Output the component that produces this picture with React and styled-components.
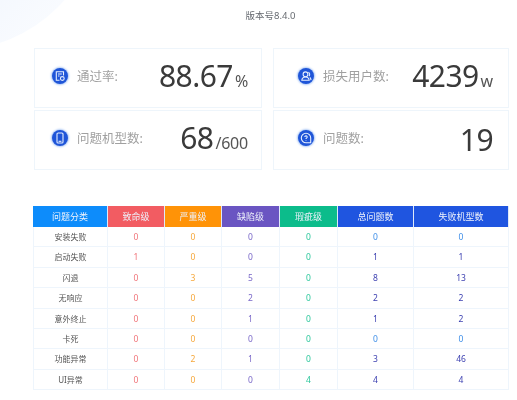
import React from "react";
import styled, { createGlobalStyle } from "styled-components";

const Global = createGlobalStyle`
  html, body { margin: 0; padding: 0; background: #fff; }
  body { font-family: "Noto Sans", "Noto Sans CJK SC", sans-serif; }
`;

const Page = styled.div`
  position: relative;
  width: 517px;
  height: 400px;
  overflow: hidden;
  background: #fff;
  box-sizing: border-box;
  padding: 9px 8px 0 33px;
  filter: blur(0.35px);
`;

const Corner = styled.div`
  position: absolute;
  left: -190px;
  top: -240px;
  width: 290px;
  height: 290px;
  border-radius: 50%;
  background: linear-gradient(135deg, #f0f5fd 60%, #fafcff 90%);
`;

const Version = styled.div`
  position: relative;
  text-align: center;
  width: 475px;
  font-size: 9.5px;
  line-height: 14px;
  color: #666a70;
`;

const Cards = styled.div`
  position: relative;
  display: grid;
  grid-template-columns: 228px 236px;
  grid-auto-rows: 60px;
  column-gap: 11px;
  row-gap: 2px;
  margin: 25px 0 0 1px;
`;

const Card = styled.div`
  display: flex;
  align-items: center;
  box-sizing: border-box;
  padding: 0 ${(p) => p.$pr}px 0 ${(p) => p.$pl}px;
  border: 1px solid #eef5fb;
  background: #fff;
`;

const Lead = styled.div`
  display: flex;
  flex: 1;
  align-items: center;
  margin-bottom: 5px;
`;

const IconDot = styled.span`
  display: flex;
  flex: none;
  align-items: center;
  justify-content: center;
  width: 16px;
  height: 16px;
  border-radius: 50%;
  background: #1f55d8;
  box-shadow: 0 0 2px 1px #a9c6f5;
  margin-right: 9px;
`;

const Label = styled.span`
  font-size: 12.5px;
  color: #a0a0a0;
  white-space: nowrap;
`;

const Value = styled.span`
  font-size: 30px;
  line-height: 40px;
  color: #3a3a3a;
  letter-spacing: -0.55px;
  white-space: nowrap;
`;

const Unit = styled.span`
  font-size: 16px;
  color: #555;
  letter-spacing: -0.2px;
  margin-left: 2px;
`;

const Table = styled.div`
  position: relative;
  display: grid;
  grid-template-columns: 75px 57px 57px 58px 58px 76px 95px;
  width: 476px;
  margin-top: 36px;
`;

const Head = styled.div`
  height: 21px;
  line-height: 21px;
  text-align: center;
  font-size: 9px;
  color: #eef2fb;
  background: ${(p) => p.$bg};
  box-sizing: border-box;
  border-right: 1px solid #dfe9f8;
`;

const Cell = styled.div`
  height: 20.4px;
  line-height: 20px;
  text-align: center;
  font-size: ${(p) => (p.$name ? 8 : 8.5)}px;
  color: ${(p) => p.$color};
  box-sizing: border-box;
  border-bottom: 1px solid #eef5fc;
  border-right: 1px solid #eef5fc;
  border-left: ${(p) => (p.$name ? "1px solid #eef5fc" : "none")};
`;

const Svg = styled.svg`
  display: block;
  width: 12px;
  height: 12px;
  fill: none;
  stroke: #e6efff;
  stroke-width: 1.1;
`;

const PassIcon = () => (
  <Svg viewBox="0 0 12 12">
    <path d="M5.500 10.300H2.300V1.700h7.200V5.500" />
    <path d="M4 4h3.800M4 6h1.500" />
    <circle cx="8.300" cy="8.500" r="1.900" />
  </Svg>
);
const PhoneIcon = () => (
  <Svg viewBox="0 0 12 12">
    <rect x="3" y="1" width="6" height="10" rx="1.100" />
    <path d="M4.600 9.300h2.800" />
  </Svg>
);
const UsersIcon = () => (
  <Svg viewBox="0 0 12 12">
    <circle cx="5.500" cy="4.300" r="2.400" />
    <path d="M1.800 10.300c.3-2.300 1.800-3.300 3.700-3.300s3.400 1 3.700 3.300z" />
    <path d="M8.400 2.200a2.400 2.400 0 0 1 .5 3.900M9.900 7.300c.7.600 1 1.500 1.100 2.800" />
  </Svg>
);
const QuestionIcon = () => (
  <Svg viewBox="0 0 12 12">
    <path d="M6 1.300a4.700 4.700 0 1 0 0 9.400h4.700V6A4.700 4.700 0 0 0 6 1.300z" />
    <path d="M4.800 5a1.200 1.200 0 1 1 1.800 1.100c-.4.200-.6.500-.6.900" />
    <path d="M6 8v.5" />
  </Svg>
);

const cards = [
  { label: "通过率:", value: "88.67", unit: "%", icon: <PassIcon />, pl: 17, pr: 13 },
  { label: "损失用户数:", value: "4239", unit: "w", icon: <UsersIcon />, pl: 24, pr: 15 },
  { label: "问题机型数:", value: "68", unit: "/600", icon: <PhoneIcon />, pl: 17, pr: 13 },
  { label: "问题数:", value: "19", unit: "", icon: <QuestionIcon />, pl: 24, pr: 15 },
];

const heads = [
  ["问题分类", "#0d8cfb"],
  ["致命级", "#f25c62"],
  ["严重级", "#ff9307"],
  ["缺陷级", "#6a55c2"],
  ["瑕疵级", "#0cbc8b"],
  ["总问题数", "#1f55e0"],
  ["失败机型数", "#1f55e0"],
];

const rows = [
  ["安装失败", 0, 0, 0, 0, 0, 0],
  ["启动失败", 1, 0, 0, 0, 1, 1],
  ["闪退", 0, 3, 5, 0, 8, 13],
  ["无响应", 0, 0, 2, 0, 2, 2],
  ["意外终止", 0, 0, 1, 0, 1, 2],
  ["卡死", 0, 0, 0, 0, 0, 0],
  ["功能异常", 0, 2, 1, 0, 3, 46],
  ["UI异常", 0, 0, 0, 4, 4, 4],
];

const colColors = ["#555", "#f0757a", "#f6a83c", "#7a68c8", "#2cc79c"];

const cellColor = (col, v) => {
  if (col === 0) return "#555";
  if (col < 5) return colColors[col];
  return v === 0 ? "#3f8fe8" : "#3b3fb0";
};

export default function App() {
  return (
    <Page>
      <Global />
      <Corner />
      <Version>版本号8.4.0</Version>
      <Cards>
        {cards.map((c) => (
          <Card key={c.label} $pl={c.pl} $pr={c.pr}>
            <Lead>
              <IconDot>{c.icon}</IconDot>
              <Label>{c.label}</Label>
            </Lead>
            <Value>
              {c.value}
              {c.unit && <Unit>{c.unit}</Unit>}
            </Value>
          </Card>
        ))}
      </Cards>
      <Table>
        {heads.map(([t, bg]) => (
          <Head key={t} $bg={bg}>{t}</Head>
        ))}
        {rows.map((r) =>
          r.map((v, i) => (
            <Cell key={r[0] + i} $name={i === 0} $color={cellColor(i, v)}>{v}</Cell>
          ))
        )}
      </Table>
    </Page>
  );
}
